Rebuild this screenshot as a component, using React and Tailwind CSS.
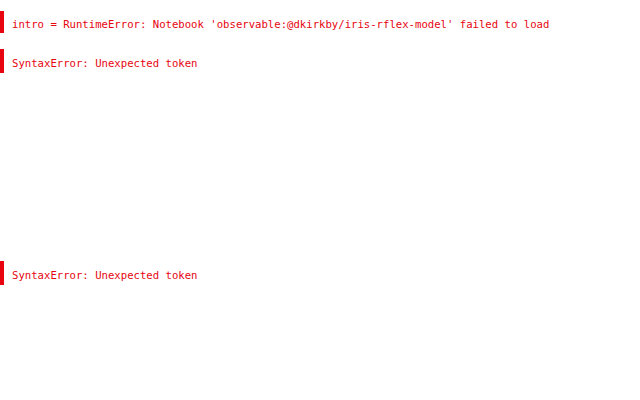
export default function App() {
  const font = { fontFamily: '"DejaVu Sans Mono", "Liberation Mono", monospace' };
  const Err = ({ children, h, pt }) => (
    <div className={`flex items-start border-l-4 border-[#e7040f] pl-2 ${h} ${pt}`}>
      <span className="text-[10.63px] leading-none text-[#e7040f] whitespace-pre" style={font}>{children}</span>
    </div>
  );
  return (
    <div className="h-[400px] w-[640px] bg-white pt-[11px]">
      <Err h="h-[22px]" pt="pt-[9px]">intro = RuntimeError: Notebook 'observable:@dkirkby/iris-rflex-model' failed to load</Err>
      <div className="mt-[16px]">
        <Err h="h-[24px]" pt="pt-[10px]">SyntaxError: Unexpected token</Err>
      </div>
      <div className="mt-[188px]">
        <Err h="h-[24px]" pt="pt-[10px]">SyntaxError: Unexpected token</Err>
      </div>
    </div>
  );
}
